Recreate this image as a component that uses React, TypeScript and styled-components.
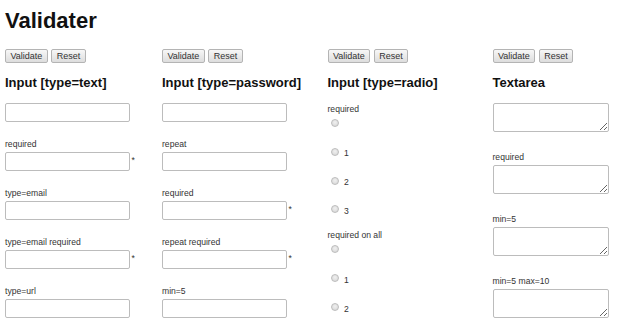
import React from "react";
import styled, { createGlobalStyle } from "styled-components";

const GlobalStyle = createGlobalStyle`
  html, body { margin: 0; padding: 0; overflow: hidden; background: #ffffff; }
  body { font-family: "Liberation Sans", Arial, sans-serif; color: #111; }
  * { box-sizing: border-box; }
`;

const Page = styled.div`
  padding: 8px 0 0 5px;
`;

const Title = styled.h1`
  margin: 0;
  font-size: 22px;
  line-height: 26px;
  font-weight: bold;
  color: #111;
`;

const Columns = styled.div`
  display: grid;
  grid-template-columns: 157px 165.5px 165px 1fr;
  margin-top: 15px;
  align-items: start;
`;

const Column = styled.section`
  display: flex;
  flex-direction: column;
  align-items: flex-start;
`;

const Toolbar = styled.div`
  display: flex;
  gap: 3.5px;
  height: 14px;
`;

const Button = styled.button`
  height: 14px;
  margin: 0;
  padding: 0 4.5px;
  font-family: "Liberation Sans", Arial, sans-serif;
  font-size: 9px;
  line-height: 12px;
  color: #333;
  border: 1px solid #b4b4b4;
  border-radius: 2px;
  background: linear-gradient(#f7f7f7, #dddddd);
`;

const Heading = styled.h2<{ $after: number }>`
  margin: 12px 0 ${(p) => p.$after}px;
  font-size: 13px;
  line-height: 16px;
  font-weight: bold;
  color: #111;
  white-space: nowrap;
`;

const Field = styled.div<{ $gap: number }>`
  display: flex;
  flex-direction: column;
  align-items: flex-start;
  margin-bottom: ${(p) => p.$gap}px;
`;

const Label = styled.label`
  display: block;
  font-size: 8.6px;
  line-height: 14px;
  margin-bottom: 1px;
  color: #333;
  white-space: nowrap;
`;

const InputRow = styled.div`
  display: flex;
  align-items: flex-start;
`;

const TextInput = styled.input`
  width: 125px;
  height: 19px;
  margin: 0;
  border: 1px solid #bcbcbc;
  border-radius: 2px;
  background: #fff;
  padding: 0 3px;
`;

const Asterisk = styled.span`
  font-size: 8.6px;
  line-height: 10px;
  margin: 3px 0 0 1.5px;
  color: #333;
`;

const TextArea = styled.textarea`
  display: block;
  width: 116px;
  height: 29px;
  margin: 0;
  border: 1px solid #bcbcbc;
  border-radius: 2px;
  background: #fff;
  resize: both;
`;

const RadioGroup = styled.div`
  display: flex;
  flex-direction: column;
  align-items: flex-start;
  margin-bottom: 14.6px;
`;

const RadioList = styled.div`
  display: flex;
  flex-direction: column;
  gap: 20.8px;
  margin-top: 2.5px;
`;

const RadioRow = styled.label`
  display: flex;
  align-items: flex-start;
  height: 8px;
  font-size: 8.6px;
  line-height: 8px;
  color: #333;
`;

const Radio = styled.input`
  appearance: none;
  -webkit-appearance: none;
  width: 8px;
  height: 8px;
  margin: 0 0 0 3.5px;
  border-radius: 50%;
  border: 1px solid #bdbdbd;
  background: radial-gradient(circle at 50% 40%, #f0f0f0, #d4d4d4);
`;

const RadioText = styled.span`
  margin-left: 5px;
  padding-top: 1.5px;
`;

type TextField = { label?: string; required?: boolean };

const textFields: TextField[] = [
  {},
  { label: "required", required: true },
  { label: "type=email" },
  { label: "type=email required", required: true },
  { label: "type=url" },
];

const passwordFields: TextField[] = [
  {},
  { label: "repeat" },
  { label: "required", required: true },
  { label: "repeat required", required: true },
  { label: "min=5" },
];

const textareaFields: TextField[] = [
  {},
  { label: "required" },
  { label: "min=5" },
  { label: "min=5 max=10" },
];

const Buttons = () => (
  <Toolbar>
    <Button type="button">Validate</Button>
    <Button type="button">Reset</Button>
  </Toolbar>
);

const InputColumn = ({
  title,
  fields,
  type,
}: {
  title: string;
  fields: TextField[];
  type: string;
}) => (
  <Column>
    <Buttons />
    <Heading $after={12}>{title}</Heading>
    {fields.map((f, i) => (
      <Field key={i} $gap={15}>
        {f.label && <Label>{f.label}</Label>}
        <InputRow>
          <TextInput type={type} />
          {f.required && <Asterisk>*</Asterisk>}
        </InputRow>
      </Field>
    ))}
  </Column>
);

const radioGroups = [
  { label: "required", name: "r1" },
  { label: "required on all", name: "r2" },
];

export default function App() {
  return (
    <>
      <GlobalStyle />
      <Page>
        <Title>Validater</Title>
        <Columns>
          <InputColumn title="Input [type=text]" fields={textFields} type="text" />
          <InputColumn title="Input [type=password]" fields={passwordFields} type="password" />
          <Column>
            <Buttons />
            <Heading $after={10.5}>Input [type=radio]</Heading>
            {radioGroups.map((g) => (
              <RadioGroup key={g.name}>
                <Label>{g.label}</Label>
                <RadioList>
                  {["", "1", "2", "3"].map((v) => (
                    <RadioRow key={v}>
                      <Radio type="radio" name={g.name} />
                      {v && <RadioText>{v}</RadioText>}
                    </RadioRow>
                  ))}
                </RadioList>
              </RadioGroup>
            ))}
          </Column>
          <Column>
            <Buttons />
            <Heading $after={12}>Textarea</Heading>
            {textareaFields.map((f, i) => (
              <Field key={i} $gap={18}>
                {f.label && <Label>{f.label}</Label>}
                <TextArea />
              </Field>
            ))}
          </Column>
        </Columns>
      </Page>
    </>
  );
}
